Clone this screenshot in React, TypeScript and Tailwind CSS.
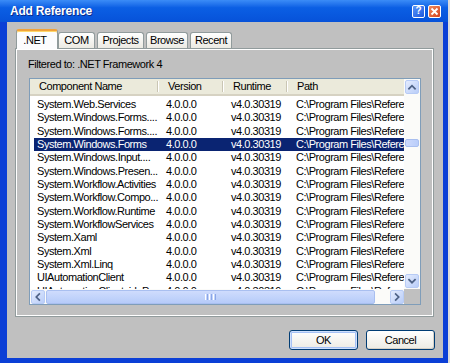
import React from 'react';

const FONT = "font-['Liberation_Sans',Arial,sans-serif]";

const ROWS = [
  'System.Web.Services',
  'System.Windows.Forms....',
  'System.Windows.Forms....',
  'System.Windows.Forms',
  'System.Windows.Input....',
  'System.Windows.Presen...',
  'System.Workflow.Activities',
  'System.Workflow.Compo...',
  'System.Workflow.Runtime',
  'System.WorkflowServices',
  'System.Xaml',
  'System.Xml',
  'System.Xml.Linq',
  'UIAutomationClient',
  'UIAutomationClientsidePr...',
];

const SELECTED = 3;
const PATH = 'C:\\Program Files\\Reference';

function Chevron({ dir }: { dir: 'up' | 'down' | 'left' | 'right' }) {
  const d = {
    up: 'M3.5 9 L7 5.5 L10.5 9',
    down: 'M3.5 5.5 L7 9 L10.5 5.5',
    left: 'M8.5 3.5 L5 7 L8.5 10.5',
    right: 'M5.5 3.5 L9 7 L5.5 10.5',
  }[dir];
  return (
    <svg width="14" height="14" viewBox="0 0 14 14">
      <path d={d} fill="none" stroke="#4d6185" strokeWidth={2} strokeLinecap="square" />
    </svg>
  );
}

function ScrollButton({ dir }: { dir: 'up' | 'down' | 'left' | 'right' }) {
  return (
    <div className="w-[14px] h-[14px] shrink-0 flex items-center justify-center rounded-[2px] border border-[#b7cbf5] bg-linear-to-br from-[#e4ecfe] to-[#b9cdf8]">
      <Chevron dir={dir} />
    </div>
  );
}

function Tab({ label, selected, w }: { label: string; selected?: boolean; w: string }) {
  if (selected) {
    return (
      <div
        className={`${w} h-[20px] -mb-px relative z-10 flex items-center justify-center pr-[4px] bg-[#fcfcfe] border-x border-[#919b9c] rounded-t-[3px] border-t-2 border-t-[#f0a23c] shadow-[inset_0_1px_0_#ffd76a]`}
      >
        {label}
      </div>
    );
  }
  return (
    <div
      className={`${w} h-[16px] flex items-center justify-center bg-linear-to-b from-white to-[#eceae3] border border-b-0 border-[#919b9c] rounded-t-[3px]`}
    >
      {label}
    </div>
  );
}

function HeaderCell({ label, w, last }: { label: string; w?: string; last?: boolean }) {
  return (
    <div className={`${w ?? 'flex-1'} h-full flex items-center`}>
      <span className="flex-1 pl-[9px] whitespace-nowrap">{label}</span>
      {!last && <span className="w-[2px] h-[11px] border-l border-[#cac6b4] border-r border-r-white" />}
    </div>
  );
}

function FormButton({ label, primary }: { label: string; primary?: boolean }) {
  return (
    <button
      className={`w-[69px] h-[20px] rounded-[3px] border border-[#003c74] bg-linear-to-b from-white to-[#ecebe4] text-[11px] text-black ${
        primary ? 'shadow-[inset_0_0_0_1px_#cfe0fc,inset_0_0_0_2px_#a5c1f5]' : 'shadow-[inset_-1px_-1px_0_#d6d0c5]'
      }`}
    >
      {label}
    </button>
  );
}

export default function App() {
  return (
    <div className={`w-[450px] h-[363px] bg-[#dcdcdc] overflow-hidden ${FONT} text-[11px] tracking-[-0.45px] text-black`}>
      <div className="w-[448px] h-[363px] flex flex-col">
        {/* Title bar */}
        <div className="h-[22px] shrink-0 flex items-center justify-between pl-[10px] pr-[7px] bg-linear-to-b from-[#3b8cf7] via-[#0b5fe4] via-35% to-[#0752d9]">
          <span className="text-white font-bold text-[12px] tracking-[-0.2px] [text-shadow:1px_1px_0_#0a2a8a]">
            Add Reference
          </span>
          <div className="flex gap-[3px]">
            <div className="w-[13px] h-[13px] rounded-[2px] border border-white bg-linear-to-br from-[#5b95fa] to-[#1d56dc] flex items-center justify-center text-white font-bold text-[10px] leading-none tracking-normal">
              ?
            </div>
            <div className="w-[13px] h-[13px] rounded-[2px] border border-white bg-linear-to-br from-[#f08a5c] to-[#d3401a] flex items-center justify-center">
              <svg width="9" height="9" viewBox="0 0 9 9">
                <path d="M1.5 1.5 L7.5 7.5 M7.5 1.5 L1.5 7.5" stroke="white" strokeWidth={1.8} />
              </svg>
            </div>
          </div>
        </div>

        {/* Body */}
        <div className="flex-1 flex flex-col bg-[#c0c0c0] border-l-[7px] border-r-[5px] border-b-[5px] border-[#0b3fd6]">
          <div className="pt-[7px] pl-[8px]">
            <div className="h-[19px] flex items-end pl-[1px]">
              <Tab label=".NET" selected w="w-[42px]" />
              <Tab label="COM" w="w-[37px]" />
              <div className="w-[2px]" />
              <Tab label="Projects" w="w-[47px]" />
              <div className="w-[2px]" />
              <Tab label="Browse" w="w-[42px]" />
              <div className="w-[2px]" />
              <Tab label="Recent" w="w-[42px]" />
            </div>

            {/* Tab panel */}
            <div className="w-[419px] h-[269px] border border-[#919b9c] shadow-[inset_1px_1px_0_#fff,inset_-1px_-1px_0_#fff] pt-[9px] pl-[12px]">
              <div className="h-[13px] leading-[13px]">Filtered to: .NET Framework 4</div>

              {/* List view */}
              <div className="mt-[7px] ml-[1px] w-[392px] h-[227px] border border-[#7f9db9] bg-white flex flex-col">
                <div className="h-[210px] flex">
                  <div className="w-[374px] overflow-hidden flex flex-col">
                    <div className="h-[17px] shrink-0 flex bg-[#ebeadb] border-b-2 border-[#d6d2c2]">
                      <HeaderCell label="Component Name" w="w-[129px]" />
                      <HeaderCell label="Version" w="w-[65px]" />
                      <HeaderCell label="Runtime" w="w-[64px]" />
                      <HeaderCell label="Path" last />
                    </div>
                    <div className="pt-[2px]">
                      {ROWS.map((name, i) => {
                        const sel = i === SELECTED;
                        return (
                          <div key={i} className="pl-[4px] h-[13.333px]">
                            <div
                              className={`flex h-full items-center leading-[13px] whitespace-nowrap ${
                                sel ? 'bg-[#0a2472] text-white' : ''
                              }`}
                            >
                              <span className="w-[125px] shrink-0 pl-[3px]">{name}</span>
                              <span className="w-[65px] shrink-0 pl-[7px]">4.0.0.0</span>
                              <span className="w-[64px] shrink-0 pl-[7px]">v4.0.30319</span>
                              <span className="shrink-0 pl-[8px]">{PATH}</span>
                            </div>
                          </div>
                        );
                      })}
                    </div>
                  </div>

                  {/* Vertical scrollbar */}
                  <div className="w-[16px] flex flex-col items-center bg-[#fbfbf9] pt-[1px] pb-[1px]">
                    <ScrollButton dir="up" />
                    <div className="h-[45px]" />
                    <div className="w-[14px] h-[8px] rounded-[2px] border border-[#a9bff0] bg-linear-to-r from-[#cdd9fc] to-[#b9cdfa]" />
                    <div className="flex-1" />
                    <ScrollButton dir="down" />
                  </div>
                </div>

                {/* Horizontal scrollbar */}
                <div className="h-[15px] flex">
                  <div className="w-[374px] flex items-center bg-[#fbfbf9] pl-[1px]">
                    <ScrollButton dir="left" />
                    <div className="ml-[1px] w-[329px] h-[14px] rounded-[2px] border border-[#a9bff0] bg-linear-to-b from-[#cfdcfd] to-[#b6cbf9] flex items-center justify-center gap-[1px]">
                      <span className="w-px h-[6px] bg-white" />
                      <span className="w-px h-[6px] bg-[#8ba6e6]" />
                      <span className="w-px h-[6px] bg-white" />
                      <span className="w-px h-[6px] bg-[#8ba6e6]" />
                      <span className="w-px h-[6px] bg-white" />
                      <span className="w-px h-[6px] bg-[#8ba6e6]" />
                    </div>
                    <div className="flex-1" />
                    <ScrollButton dir="right" />
                  </div>
                  <div className="w-[16px] bg-[#c0c0c0]" />
                </div>
              </div>
            </div>
          </div>

          <div className="mt-[13px] pr-[8px] flex justify-end gap-[8px]">
            <FormButton label="OK" primary />
            <FormButton label="Cancel" />
          </div>
        </div>
      </div>
    </div>
  );
}
